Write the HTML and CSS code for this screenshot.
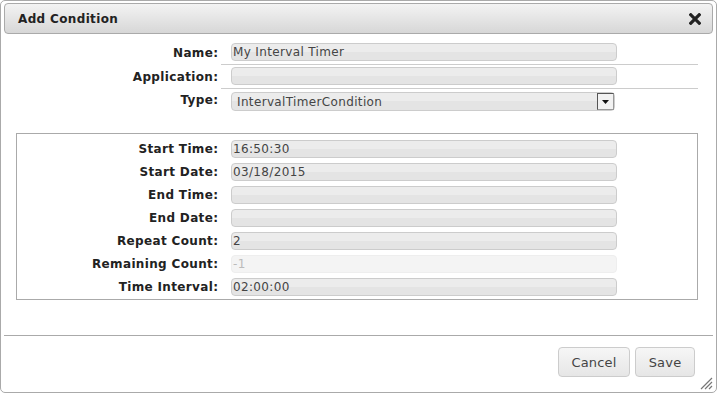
FILE: index.html
```html
<!DOCTYPE html>
<html>
<head>
<meta charset="utf-8">
<link rel="stylesheet" href="styles.css">
</head>
<body>
<div class="dialog">
  <div class="titlebar">
    <span class="title">Add Condition</span>
    <svg class="close" width="12" height="12" viewBox="0 0 12 12"><path d="M1.8 1.8 L10.2 10.2 M10.2 1.8 L1.8 10.2" stroke="#222" stroke-width="3.2" stroke-linecap="square"/></svg>
  </div>
  <div class="top-form">
    <div class="lbl">Name:</div>
    <div class="cell sep"><div class="input">My Interval Timer</div></div>
    <div class="lbl">Application:</div>
    <div class="cell sep"><div class="input"></div></div>
    <div class="lbl">Type:</div>
    <div class="cell type"><div class="select"><span>IntervalTimerCondition</span><span class="arrow"><svg width="7" height="4" viewBox="0 0 7 4"><path d="M0 0 H7 L3.5 4 Z" fill="#111"/></svg></span></div></div>
  </div>
  <div class="box">
    <div class="lbl">Start Time:</div><div class="input">16:50:30</div>
    <div class="lbl">Start Date:</div><div class="input">03/18/2015</div>
    <div class="lbl">End Time:</div><div class="input"></div>
    <div class="lbl">End Date:</div><div class="input"></div>
    <div class="lbl">Repeat Count:</div><div class="input">2</div>
    <div class="lbl">Remaining Count:</div><div class="input disabled">-1</div>
    <div class="lbl">Time Interval:</div><div class="input">02:00:00</div>
  </div>
  <div class="footer">
    <button class="btn cancel">Cancel</button>
    <button class="btn save">Save</button>
  </div>
  <svg class="grip" width="14" height="14" viewBox="0 0 14 14"><path d="M13 2 L2 13 M13 6 L6 13 M13 10 L10 13" stroke="#777" stroke-width="1.2"/></svg>
</div>
</body>
</html>
```
FILE: styles.css
```css
body {
  margin: 0;
  background: #fff;
  font-family: "DejaVu Sans", Verdana, sans-serif;
  font-size: 12px;
  letter-spacing: 0.35px;
  color: #222;
}
.dialog {
  position: relative;
  width: 717px;
  height: 393px;
  box-sizing: border-box;
  border: 1px solid #aaa;
  border-radius: 5px;
  padding: 2px 3px 0;
  display: flex;
  flex-direction: column;
}
.titlebar {
  height: 31px;
  box-sizing: border-box;
  border: 1px solid #aaa;
  border-radius: 4px;
  background: linear-gradient(#f3f3f3, #d7d7d7);
  display: flex;
  align-items: center;
  justify-content: space-between;
  padding: 0 11px 0 13px;
}
.title {
  font-weight: bold;
  font-size: 12px;
  color: #222;
}
.close { display: block; }
.top-form {
  margin-top: 7px;
  display: grid;
  grid-template-columns: 214px 477px;
  column-gap: 3px;
}
.lbl {
  font-weight: bold;
  text-align: right;
  color: #222;
  display: flex;
  align-items: center;
  justify-content: flex-end;
  margin-right: -0.35px;
}
.top-form .lbl { padding-bottom: 1px; }
.cell {
  padding: 2px 0 3px 10px;
}
.cell.sep { border-bottom: 1px solid #ccc; }
.cell.type { padding: 3px 0 0 10px; }
.input {
  width: 386px;
  height: 18px;
  box-sizing: border-box;
  border: 1px solid #ccc;
  border-radius: 4px;
  background: linear-gradient(#ececec 50%, #e4e4e4 50%);
  color: #444;
  padding-left: 1px;
  line-height: 17px;
  font-size: 12px;
}
.input.disabled {
  background: #f4f4f4;
  border-color: #eee;
  color: #bbb;
}
.select {
  width: 384px;
  height: 19px;
  box-sizing: border-box;
  border: 1px solid #ccc;
  border-radius: 4px;
  background: linear-gradient(#ececec 50%, #e4e4e4 50%);
  color: #444;
  padding-left: 5px;
  line-height: 18px;
  display: flex;
  justify-content: space-between;
}
.arrow {
  width: 17px;
  height: 17px;
  box-sizing: border-box;
  border: 1px solid #999;
  border-top-color: #555;
  border-left-color: #555;
  background: #f2f2f2;
  display: flex;
  align-items: center;
  justify-content: center;
}
.arrow svg { display: block; }
.box {
  margin: 22px 0 0 12px;
  width: 682px;
  box-sizing: border-box;
  border: 1px solid #aaa;
  padding: 6px 0 3px;
  display: grid;
  grid-template-columns: 201px 386px;
  column-gap: 13px;
  row-gap: 5px;
}
.footer {
  margin-top: 35px;
  border-top: 1px solid #aaa;
  padding: 11px 18px 0 0;
  display: flex;
  justify-content: flex-end;
  gap: 5px;
}
.btn {
  height: 30px;
  box-sizing: border-box;
  border: 1px solid #ccc;
  border-radius: 4px;
  background: linear-gradient(#f6f6f6, #e6e6e6);
  color: #444;
  font-family: "DejaVu Sans", Verdana, sans-serif;
  font-size: 13px;
  letter-spacing: 0.2px;
  padding: 0;
}
.cancel { width: 72px; }
.save { width: 60px; }
.grip {
  position: absolute;
  right: 3px;
  bottom: 2px;
}
```
